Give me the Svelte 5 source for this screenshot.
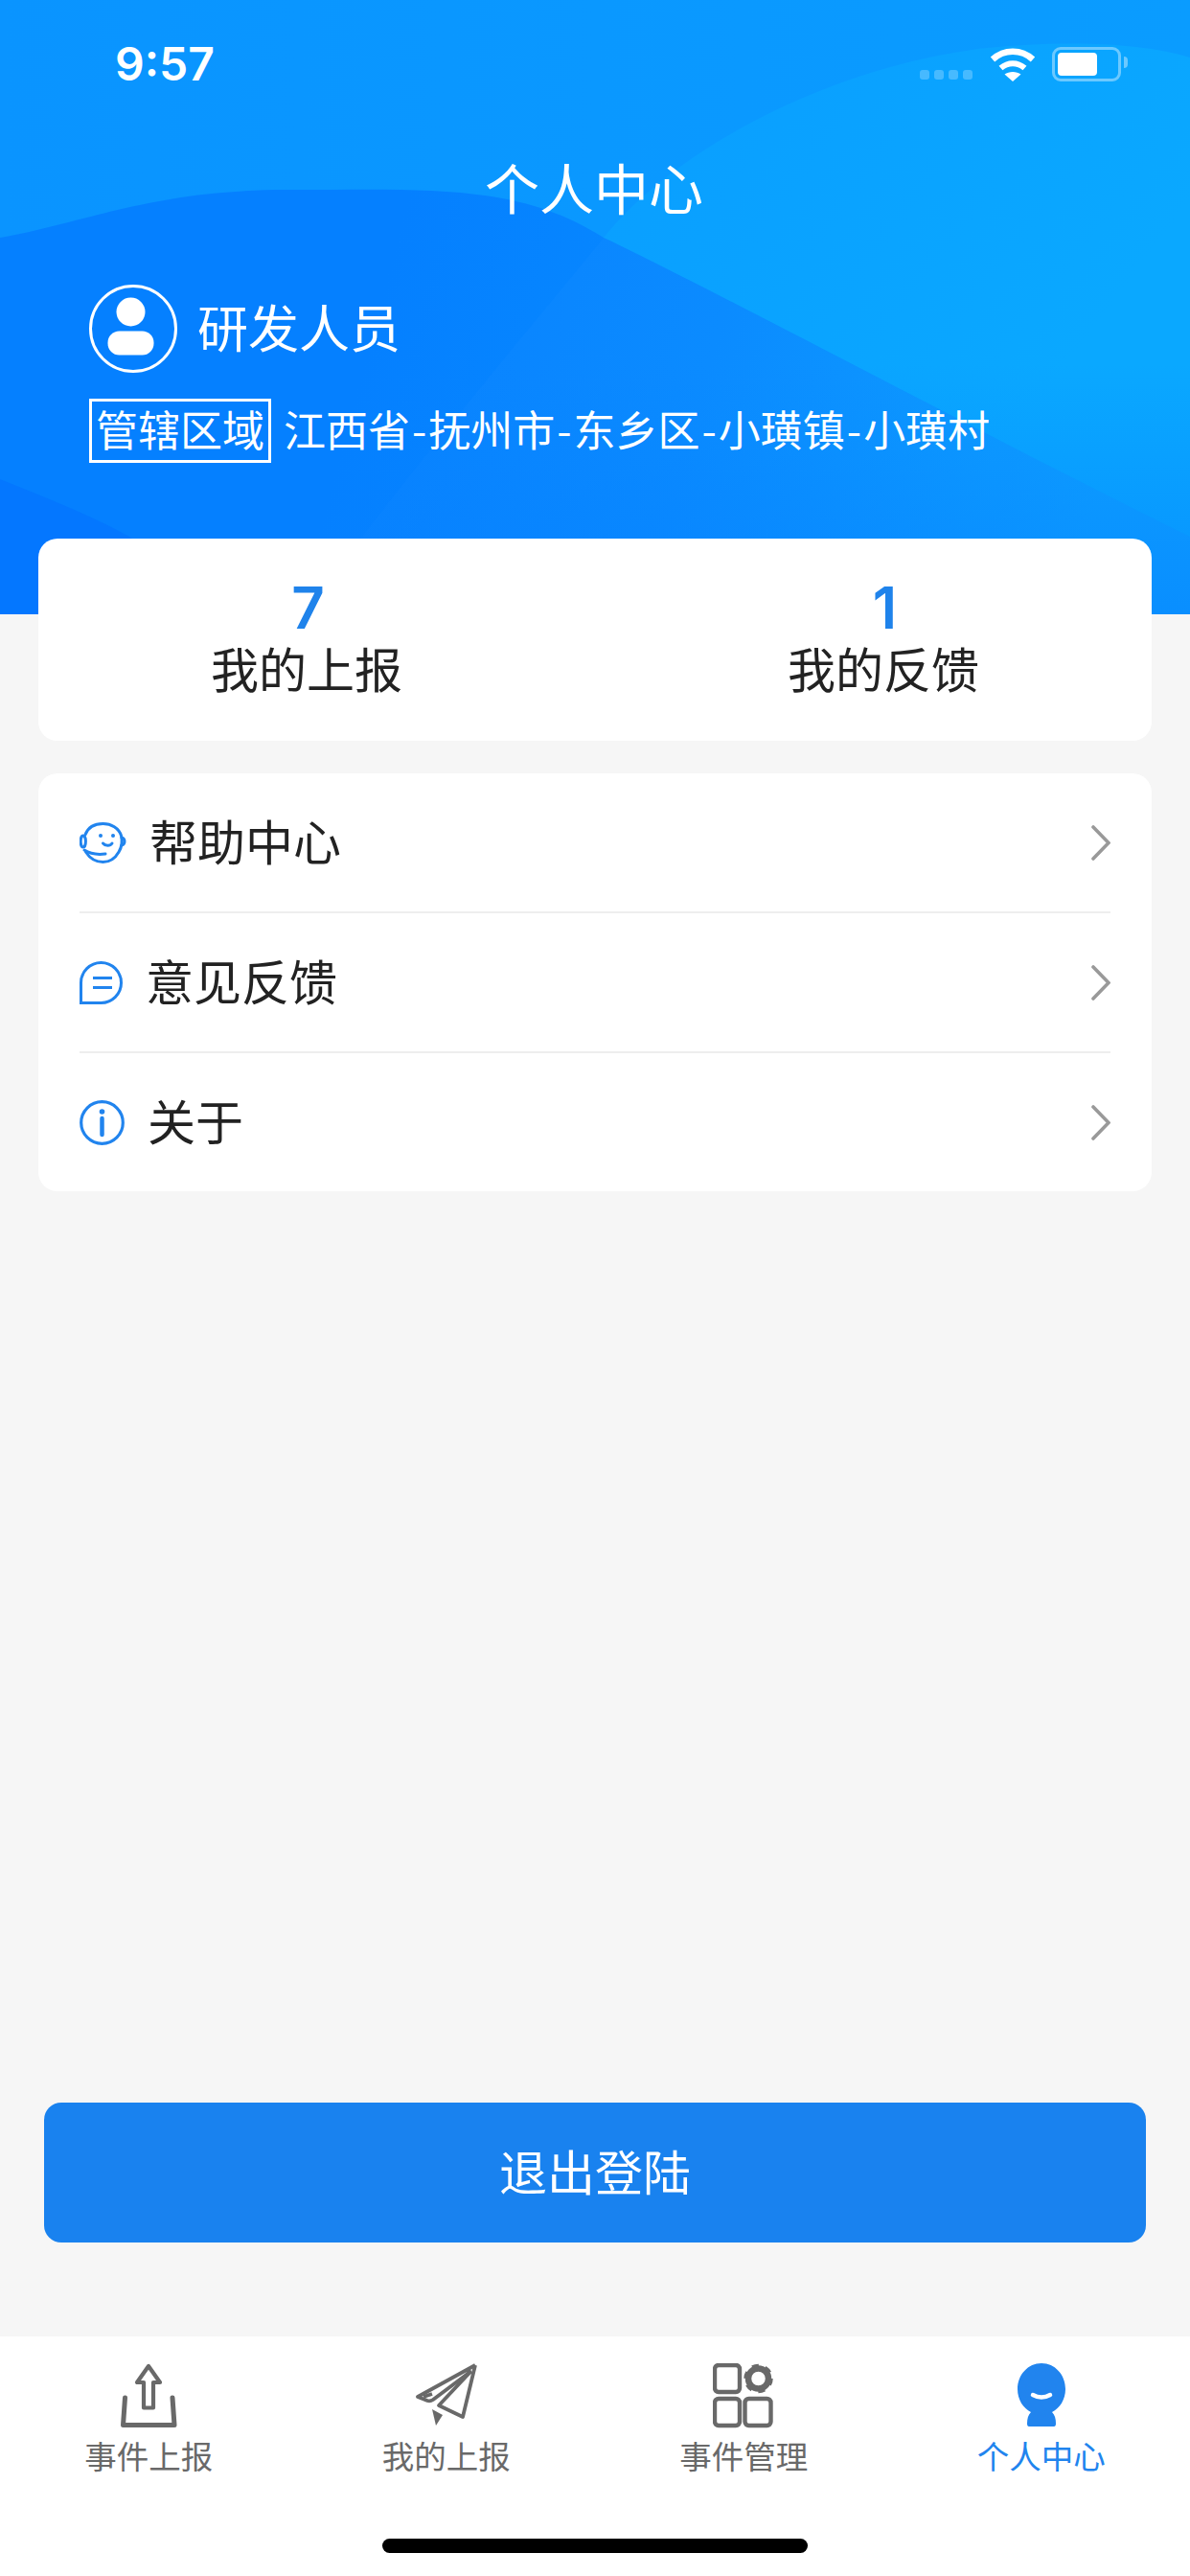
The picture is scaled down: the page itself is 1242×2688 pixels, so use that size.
<script>
  const region = ['江西省', '抚州市', '东乡区', '小璜镇', '小璜村'];
  const stats = [
    { value: 7, label: '我的上报' },
    { value: 1, label: '我的反馈' }
  ];
  const tabs = ['事件上报', '我的上报', '事件管理', '个人中心'];
</script>

<div class="page">
  <header class="hero">
    <svg class="waves" viewBox="0 0 1242 641" preserveAspectRatio="none" aria-hidden="true">
      <defs>
        <linearGradient id="base" x1="0" y1="0" x2="1" y2="0">
          <stop offset="0" stop-color="#0a94ff" />
          <stop offset="1" stop-color="#0a9cff" />
        </linearGradient>
        <linearGradient id="low" gradientUnits="userSpaceOnUse" x1="400" y1="300" x2="1150" y2="500">
          <stop offset="0" stop-color="#0580ff" />
          <stop offset="0.45" stop-color="#0789ff" />
          <stop offset="1" stop-color="#0a9fff" />
        </linearGradient>
        <linearGradient id="light" gradientUnits="userSpaceOnUse" x1="700" y1="100" x2="1100" y2="400">
          <stop offset="0" stop-color="#0a9fff" />
          <stop offset="1" stop-color="#0aa8ff" />
        </linearGradient>
        <linearGradient id="foot" gradientUnits="userSpaceOnUse" x1="0" y1="380" x2="0" y2="641">
          <stop offset="0" stop-color="#0580ff" stop-opacity="0" />
          <stop offset="1" stop-color="#0580ff" stop-opacity="0.55" />
        </linearGradient>
      </defs>
      <rect width="1242" height="641" fill="url(#base)" />
      <path d="M630 248 C 700 160 860 70 1030 50 C 1110 42 1190 44 1242 60 V641 H1000 Z" fill="url(#light)" />
      <path d="M0 248 C 90 232 160 198 300 198 C 440 198 540 190 630 248 C 740 300 1000 440 1242 560 V641 H0 Z" fill="url(#low)" />
      <path d="M630 248 C 530 370 420 500 317 641 H1242 V560 C 1000 440 740 300 630 248 Z" fill="#fff" opacity="0.02" />
      <rect y="380" width="1242" height="261" fill="url(#foot)" />
      <path d="M0 500 C 50 520 100 540 135 560 C 170 585 205 615 240 641 H0 Z" fill="#0477ff" />
    </svg>

    <div class="status">
      <span class="time">9:57</span>
      <div class="status-icons">
        <div class="signal"><i></i><i></i><i></i><i></i></div>
        <svg class="wifi" viewBox="0 0 48 36" aria-hidden="true">
          <path d="M3 13 C 15 2 33 2 45 13" fill="none" stroke="#fff" stroke-width="6.5" />
          <path d="M11.5 22 C 19 15.5 29 15.5 36.500 22" fill="none" stroke="#fff" stroke-width="6" />
          <path d="M24 36 L15.500 28.500 C 20 25 28 25 32.500 28.500 Z" fill="#fff" />
        </svg>
        <div class="battery"><span></span></div>
      </div>
    </div>

    <h1 class="title">个人中心</h1>

    <div class="user">
      <svg class="avatar" viewBox="0 0 92 92" aria-hidden="true">
        <circle cx="46" cy="46" r="44.500" fill="none" stroke="#fff" stroke-width="3" />
        <circle cx="43.500" cy="28.500" r="15" fill="#fff" />
        <rect x="19.500" y="48.500" width="48" height="25" rx="12" fill="#fff" />
      </svg>
      <span class="name">研发人员</span>
    </div>

    <div class="region">
      <span class="region-tag">管辖区域</span>
      <span class="region-path">
        {#each region as part, i}{#if i > 0}<span class="sep">-</span>{/if}{part}{/each}
      </span>
    </div>
  </header>

  <main class="content">
    <section class="card stats">
      {#each stats as s}
        <div class="stat">
          <span class="stat-value">{s.value}</span>
          <span class="stat-label">{s.label}</span>
        </div>
      {/each}
    </section>

    <section class="card menu">
      <div class="row">
        <svg class="ico" width="49" height="43" viewBox="0 0 49 43" fill="none" stroke="#2184ee" stroke-width="3" stroke-linecap="round" aria-hidden="true">
          <path d="M6 13 C 9 5 16 1.500 24.500 1.500 C 33 1.500 41 6 43.500 14 C 45 20 44 26 41 31 C 37 38 31 41.500 24.500 41.500 C 17 41.500 11 38 6.500 31" />
          <ellipse cx="3.800" cy="20" rx="2.600" ry="6" />
          <path d="M44 16 C 48 17 48 23 44 24" />
          <path d="M5 29 C 11 33 19 34 27 33" />
          <circle cx="22" cy="14" r="2" fill="#2184ee" stroke="none" />
          <circle cx="35" cy="14" r="2" fill="#2184ee" stroke="none" />
          <path d="M24.500 22 C 27 25 32 25 34 22" />
        </svg>
        <span class="row-text">帮助中心</span>
        <svg class="chevron" width="20" height="37" viewBox="0 0 20 37" aria-hidden="true"><path d="M2 2 L18 18.500 L2 35" fill="none" stroke="#999" stroke-width="3.600" stroke-linecap="round" /></svg>
      </div>
      <div class="row">
        <svg class="ico" width="45" height="45" viewBox="0 0 45 45" fill="none" stroke="#2184ee" stroke-width="3" aria-hidden="true">
          <path d="M1.500 43.500 V22.500 A21 21 0 1 1 22.500 43.500 Z" />
          <path d="M14 17.500 H34 M14 27.500 H34" />
        </svg>
        <span class="row-text">意见反馈</span>
        <svg class="chevron" width="20" height="37" viewBox="0 0 20 37" aria-hidden="true"><path d="M2 2 L18 18.500 L2 35" fill="none" stroke="#999" stroke-width="3.600" stroke-linecap="round" /></svg>
      </div>
      <div class="row">
        <svg class="ico" width="47" height="47" viewBox="0 0 47 47" fill="none" stroke="#2184ee" stroke-width="3.200" aria-hidden="true">
          <circle cx="23.500" cy="23.500" r="21.800" />
          <circle cx="23.500" cy="12" r="2.800" fill="#2184ee" stroke="none" />
          <path d="M23.500 19 V36" stroke-width="4.500" stroke-linecap="round" />
        </svg>
        <span class="row-text">关于</span>
        <svg class="chevron" width="20" height="37" viewBox="0 0 20 37" aria-hidden="true"><path d="M2 2 L18 18.500 L2 35" fill="none" stroke="#999" stroke-width="3.600" stroke-linecap="round" /></svg>
      </div>
    </section>

    <button class="logout"><span>退出登陆</span></button>
  </main>

  <nav class="tabbar">
    <div class="tabs">
      {#each tabs as t, i}
        <div class="tab" class:active={i === 3}>
          <svg viewBox="0 0 64 68" width="64" height="68" aria-hidden="true">
            {#if i === 0}
              <g fill="none" stroke="#696969" stroke-linejoin="round" stroke-linecap="round">
                <path d="M7.500 36 L5.500 64.500 H59 L57 36" stroke-width="5" />
                <path d="M32 3 L20 20 H27 V46.500 H37 V20 H44 Z" stroke-width="4.200" />
              </g>
            {:else if i === 1}
              <g fill="none" stroke="#696969" stroke-width="3.800" stroke-linejoin="round">
                <path d="M62 2 L2 35 L12 39 Q15 40 18 38 L58 8" />
                <path d="M62 2 L49 56 L24 44 L57 9" />
                <path d="M8 35 L17 32" />
              </g>
              <path d="M17 48 L28 54 L21 65 Z" fill="#696969" />
            {:else if i === 2}
              <g fill="none" stroke="#696969" stroke-width="4.400">
                <rect x="2" y="2" width="26" height="28" rx="4" />
                <rect x="2" y="37" width="26" height="28" rx="4" />
                <rect x="33.500" y="37" width="27" height="28" rx="4" />
                <circle cx="47.500" cy="16" r="10.500" stroke-width="6.500" />
                <circle cx="47.500" cy="16" r="13.500" stroke-width="3.500" stroke-dasharray="7 7.130" />
              </g>
            {:else}
              <path d="M32 0 C 46 0 57 12 57 27 C 57 38 51 47 43 51 C 46 54 47 58 47 63 Q47 66 45 66 H19 Q17 66 17 63 C 17 58 18 54 21 51 C 13 47 7 38 7 27 C 7 12 18 0 32 0 Z" fill="#2184ee" />
              <path d="M23 33 Q32 38 41 33" fill="none" stroke="#fff" stroke-width="4.500" stroke-linecap="round" />
            {/if}
          </svg>
          <span class="tab-label">{t}</span>
        </div>
      {/each}
    </div>
    <div class="home-bar"></div>
  </nav>
</div>

<style>
  :global(body) {
    margin: 0;
    background: #f6f6f6;
  }

  .page {
    position: relative;
    display: flex;
    flex-direction: column;
    width: 1242px;
    height: 2688px;
    overflow: hidden;
    background: #f6f6f6;
    font-family: 'Noto Sans CJK SC', 'Noto Sans', sans-serif;
    color: #222;
  }

  .hero {
    position: relative;
    height: 641px;
    flex-shrink: 0;
    box-sizing: border-box;
    padding-top: 40px;
    color: #fff;
  }

  .waves {
    position: absolute;
    inset: 0;
    width: 100%;
    height: 100%;
  }

  .status,
  .title,
  .user,
  .region {
    position: relative;
  }

  .status {
    display: flex;
    align-items: center;
    justify-content: space-between;
    height: 54px;
    padding: 0 72px 0 120px;
  }

  .time {
    font-family: Inter, sans-serif;
    font-size: 48px;
    font-weight: 600;
    line-height: 54px;
  }

  .status-icons {
    display: flex;
    align-items: center;
  }

  .signal {
    display: flex;
    gap: 5px;
    margin: 22px 18px 0 0;
  }

  .signal i {
    width: 10px;
    height: 10px;
    border-radius: 3px;
    background: rgba(255, 255, 255, 0.25);
  }

  .wifi {
    width: 48px;
    height: 36px;
    margin-right: 17px;
  }

  .battery {
    position: relative;
    box-sizing: border-box;
    width: 72px;
    height: 36px;
    padding: 3px;
    border: 3px solid rgba(255, 255, 255, 0.4);
    border-radius: 9px;
  }

  .battery span {
    display: block;
    width: 41px;
    height: 24px;
    border-radius: 4px;
    background: #fff;
  }

  .battery::after {
    content: '';
    position: absolute;
    top: 7px;
    right: -10px;
    width: 4px;
    height: 12px;
    border-radius: 0 6px 6px 0;
    background: rgba(255, 255, 255, 0.4);
  }

  .title {
    margin: 60px 0 0;
    font-size: 57px;
    font-weight: 400;
    line-height: 80px;
    text-align: center;
    padding-right: 2px;
  }

  .user {
    display: flex;
    align-items: center;
    gap: 21px;
    margin: 63px 0 0 93px;
  }

  .avatar {
    width: 92px;
    height: 92px;
  }

  .name {
    font-size: 53px;
    line-height: 86px;
    margin-bottom: 6px;
  }

  .region {
    display: flex;
    align-items: center;
    gap: 13px;
    margin: 27px 0 0 93px;
  }

  .region-tag {
    box-sizing: border-box;
    width: 190px;
    height: 67px;
    border: 3px solid #fff;
    font-size: 44px;
    line-height: 57px;
    text-align: center;
    white-space: nowrap;
  }

  .region-path {
    font-size: 44px;
    line-height: 63px;
    margin-bottom: 4px;
    white-space: nowrap;
  }

  .sep {
    margin: 0 2px;
  }

  .content {
    display: flex;
    flex: 1;
    flex-direction: column;
    margin-top: -79px;
    position: relative;
  }

  .card {
    margin: 0 40px;
    background: #fff;
    border-radius: 20px;
  }

  .stats {
    display: flex;
    justify-content: center;
    gap: 402px;
    height: 211px;
    box-sizing: border-box;
    padding-top: 40px;
  }

  .stat {
    display: flex;
    flex-direction: column;
    align-items: center;
    width: 200px;
  }

  .stat-value {
    font-family: Inter, sans-serif;
    font-size: 60px;
    font-weight: 600;
    line-height: 64px;
    color: #1f83eb;
    margin-left: 3px;
  }

  .stat-label {
    font-size: 50px;
    line-height: 60px;
    white-space: nowrap;
  }

  .menu {
    margin-top: 34px;
    padding: 0 43px;
    height: 436px;
    display: flex;
    flex-direction: column;
  }

  .row {
    display: flex;
    flex: 1;
    align-items: center;
    gap: 24px;
    border-bottom: 2px solid #eeeeee;
  }

  .row:last-child {
    border-bottom: none;
  }

  .row-text {
    flex: 1;
    font-size: 50px;
    line-height: 64px;
    margin-bottom: 6px;
  }

  .logout {
    display: block;
    flex-shrink: 0;
    width: 1150px;
    height: 146px;
    margin: auto 46px 98px;
    border: none;
    border-radius: 18px;
    background: #1982ef;
    color: #fff;
    font-family: inherit;
    font-size: 50px;
  }

  .logout span {
    display: block;
    margin-bottom: 6px;
  }

  .tabbar {
    position: relative;
    height: 250px;
    flex-shrink: 0;
    background: #fff;
  }

  .tabs {
    display: grid;
    grid-template-columns: repeat(4, 1fr);
    padding-top: 28px;
  }

  .tab {
    display: flex;
    flex-direction: column;
    align-items: center;
    color: #696969;
  }

  .tab.active {
    color: #2184ee;
  }

  .tab-label {
    margin-top: 5px;
    font-size: 33.500px;
    line-height: 46px;
  }

  .home-bar {
    position: absolute;
    left: 399px;
    bottom: 24px;
    width: 444px;
    height: 15px;
    border-radius: 8px;
    background: #000;
  }
</style>
